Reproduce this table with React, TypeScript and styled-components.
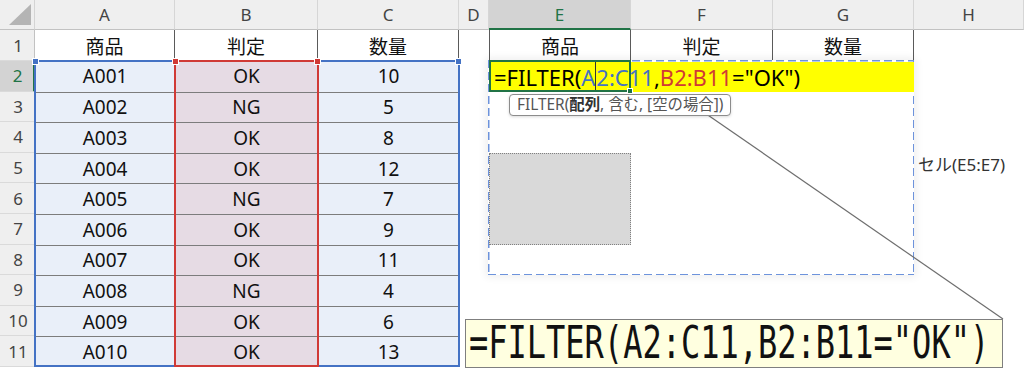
import React from 'react'
import styled, { createGlobalStyle } from 'styled-components'

const GlobalStyle = createGlobalStyle`
  *, *::before, *::after { box-sizing: border-box; }
  html, body { margin: 0; padding: 0; background: #fff; }
  body { font-family: 'Noto Sans', 'Noto Sans CJK JP', sans-serif; }
`

const COLS = ['A', 'B', 'C', 'D', 'E', 'F', 'G', 'H']
const TITLES = ['商品', '判定', '数量']

// 商品コード, 判定, 数量
const rows: [string, string, number][] = [
  ['A001', 'OK', 10],
  ['A002', 'NG', 5],
  ['A003', 'OK', 8],
  ['A004', 'OK', 12],
  ['A005', 'NG', 7],
  ['A006', 'OK', 9],
  ['A007', 'OK', 11],
  ['A008', 'NG', 4],
  ['A009', 'OK', 6],
  ['A010', 'OK', 13],
]

const GREEN = '#217346'
const BLUE = '#4472c4'
const RED = '#d03a36'
const DASH = '#6d93dc'

export default function App() {
  return (
    <>
      <GlobalStyle />
      <Sheet>
        <Corner />
        {COLS.map((c, i) => (
          <ColHead key={c} $c={i + 2} $active={c === 'E'}>
            {c}
          </ColHead>
        ))}
        {Array.from({ length: 11 }, (_, i) => (
          <RowHead key={i} $r={i + 2} $active={i === 1}>
            {i + 1}
          </RowHead>
        ))}

        {/* 1行目の見出し */}
        {TITLES.map((t, i) => (
          <TitleCell key={'l' + t} $c={i + 2}>
            {t}
          </TitleCell>
        ))}
        {TITLES.map((t, i) => (
          <TitleCell key={'r' + t} $c={i + 6} $lead={i === 0}>
            {t}
          </TitleCell>
        ))}

        {rows.map((row, i) =>
          row.map((v, j) => (
            <DataCell key={`${i}-${j}`} $r={i + 3} $c={j + 2} $pink={j === 1} $first={i === 0}>
              {v}
            </DataCell>
          )),
        )}

        {/* 数式の参照範囲 */}
        <RangeBox $c1={2} $c2={5} $color={BLUE} />
        <RangeBox $c1={3} $c2={4} $color={RED} />

        <SpillBox />
        <FormulaBar>
          =FILTER(<Ref $color={BLUE}>A</Ref>
          <Caret />
          <Ref $color={BLUE}>2:C11</Ref>,<Ref $color={RED}>B2:B11</Ref>="OK")
        </FormulaBar>
        <ActiveCell />
        <GhostBlock />
        <Hint>
          FILTER(<b>配列</b>, 含む, [空の場合])
        </Hint>
        <SideLabel>セル(E5:E7)</SideLabel>

        <Connector width="1024" height="369" viewBox="0 0 1024 369">
          <line x1="702" y1="111" x2="1003" y2="319" stroke="#6e6e6e" strokeWidth="1.2" />
        </Connector>

        <Callout>
          <CalloutText>=FILTER(A2:C11,B2:B11="OK")</CalloutText>
        </Callout>
      </Sheet>
    </>
  )
}

const Sheet = styled.div`
  position: relative;
  display: grid;
  grid-template-columns: 35px 140px 143px 141px 30px 142px 142px 141px 1fr;
  grid-template-rows: 30px 31px repeat(10, 30.6px);
  width: 1024px;
  height: 369px;
  overflow: hidden;
  background: #fff;
`

const Corner = styled.div`
  grid-row: 1;
  grid-column: 1;
  position: relative;
  background: #efefef;
  border-right: 1px solid #d4d4d4;
  border-bottom: 1px solid #c2c2c2;

  &::after {
    content: '';
    position: absolute;
    right: 3px;
    bottom: 4px;
    border-left: 22px solid transparent;
    border-bottom: 21px solid #b4b4b4;
  }
`

const ColHead = styled.div<{ $c: number; $active?: boolean }>`
  grid-row: 1;
  grid-column: ${(p) => p.$c};
  display: flex;
  align-items: center;
  justify-content: center;
  background: ${(p) => (p.$active ? '#d3d3d3' : '#efefef')};
  color: ${(p) => (p.$active ? GREEN : '#444')};
  border-right: 1px solid #d6d6d6;
  border-bottom: ${(p) => (p.$active ? `2px solid ${GREEN}` : '1px solid #c2c2c2')};
  font-size: 17px;
`

const RowHead = styled.div<{ $r: number; $active?: boolean }>`
  grid-row: ${(p) => p.$r};
  grid-column: 1;
  display: flex;
  align-items: center;
  justify-content: center;
  padding-left: 2px;
  background: ${(p) => (p.$active ? '#d3d3d3' : '#efefef')};
  color: ${(p) => (p.$active ? GREEN : '#444')};
  border-right: ${(p) => (p.$active ? `2px solid ${GREEN}` : '1px solid #c2c2c2')};
  border-bottom: 1px solid #dadada;
  font-size: 17px;
`

const TitleCell = styled.div<{ $c: number; $lead?: boolean }>`
  grid-row: 2;
  grid-column: ${(p) => p.$c};
  display: flex;
  align-items: center;
  justify-content: center;
  background: #fff;
  color: #111;
  border-right: 1px solid #5a5a5a;
  border-left: ${(p) => (p.$lead ? '1px solid #5a5a5a' : 'none')};
  font-size: 19px;
`

const DataCell = styled.div<{ $r: number; $c: number; $pink?: boolean; $first?: boolean }>`
  grid-row: ${(p) => p.$r};
  grid-column: ${(p) => p.$c};
  display: flex;
  align-items: center;
  justify-content: center;
  background: ${(p) => (p.$pink ? '#e6dbe4' : '#e9eff9')};
  border-top: ${(p) => (p.$first ? 'none' : '1.5px solid #7c7c7c')};
  color: #111;
  font-size: 19px;
`

const RangeBox = styled.div<{ $c1: number; $c2: number; $color: string }>`
  grid-row: 3 / 13;
  grid-column: ${(p) => p.$c1} / ${(p) => p.$c2};
  position: relative;
  margin: -1px -1px 0 -1px;
  border: 2px solid ${(p) => p.$color};
  pointer-events: none;

  &::before,
  &::after {
    content: '';
    position: absolute;
    top: -4px;
    width: 7px;
    height: 7px;
    background: ${(p) => p.$color};
    border: 1px solid #fff;
  }
  &::before {
    left: -4px;
  }
  &::after {
    right: -4px;
  }
`

// 破線は border: dashed だと短すぎるのでグラデーションで描く
const SpillBox = styled.div`
  grid-row: 3 / 10;
  grid-column: 6 / 9;
  z-index: 1;
  margin: -1px 0 0 -1px;
  background:
    repeating-linear-gradient(90deg, ${DASH} 0 8px, transparent 8px 12px) left top / 100% 1.5px no-repeat,
    repeating-linear-gradient(90deg, ${DASH} 0 8px, transparent 8px 12px) left bottom / 100% 1.5px no-repeat,
    repeating-linear-gradient(180deg, ${DASH} 0 8px, transparent 8px 12px) left top / 1.5px 100% no-repeat,
    repeating-linear-gradient(180deg, ${DASH} 0 8px, transparent 8px 12px) right top / 1.5px 100% no-repeat,
    #fff;
  box-shadow: 0 0 8px 2px rgba(0, 0, 0, 0.07);
`

const FormulaBar = styled.div`
  grid-row: 3;
  grid-column: 6 / 9;
  z-index: 2;
  display: flex;
  align-items: center;
  margin: 1px 0 0 0;
  padding-left: 5px;
  background: #ffff00;
  color: #000;
  font-size: 22px;
  white-space: pre;
`

const Ref = styled.span<{ $color: string }>`
  color: ${(p) => p.$color};
`

const Caret = styled.span`
  align-self: stretch;
  width: 1px;
  background: #333;
`

const ActiveCell = styled.div`
  grid-row: 3;
  grid-column: 6;
  z-index: 3;
  position: relative;
  margin: -1px 0 0 0;
  border: 2px solid ${GREEN};
  pointer-events: none;

  &::after {
    content: '';
    position: absolute;
    right: -4px;
    bottom: -4px;
    width: 6px;
    height: 6px;
    background: ${GREEN};
    border: 1px solid #fff;
  }
`

const GhostBlock = styled.div`
  grid-row: 6 / 9;
  grid-column: 6;
  z-index: 2;
  background: #d9d9d9;
  border: 1px dotted #808080;
`

const Hint = styled.div`
  grid-row: 4;
  grid-column: 6 / 9;
  justify-self: start;
  align-self: start;
  z-index: 5;
  margin: 2px 0 0 20px;
  padding: 0 7px;
  height: 22px;
  line-height: 20px;
  background: #fff;
  border: 1px solid #8c8c8c;
  border-radius: 4px;
  box-shadow: 0 1px 3px rgba(0, 0, 0, 0.15);
  color: #555;
  font-size: 15.4px;
  white-space: nowrap;

  b {
    color: #333;
    font-weight: 700;
  }
`

const SideLabel = styled.div`
  grid-row: 6;
  grid-column: 9;
  align-self: start;
  padding-left: 4px;
  line-height: 24px;
  color: #333;
  font-size: 17px;
  white-space: nowrap;
`

const Connector = styled.svg`
  position: absolute;
  left: 0;
  top: 0;
  z-index: 4;
  pointer-events: none;
`

const Callout = styled.div`
  grid-row: 11 / 13;
  grid-column: 5 / 10;
  justify-self: start;
  align-self: start;
  z-index: 6;
  width: 538px;
  height: 49px;
  margin: 13px 0 0 6px;
  padding-left: 3px;
  display: flex;
  align-items: center;
  background: #ffffe0;
  border: 1px solid #7f7f7f;
`

const CalloutText = styled.span`
  display: inline-block;
  font-family: 'DejaVu Sans Mono', monospace;
  font-size: 32px;
  line-height: 1;
  color: #111;
  transform: scaleY(1.4);
  white-space: pre;
`
